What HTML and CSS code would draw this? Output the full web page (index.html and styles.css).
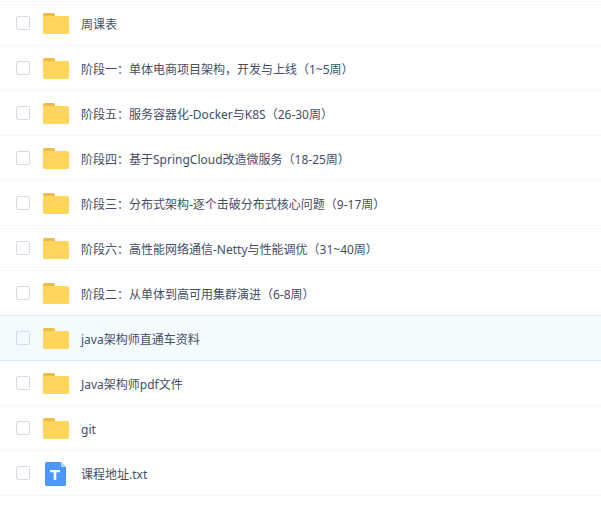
FILE: index.html
```html
<!DOCTYPE html>
<html lang="zh-CN">
  <head>
    <meta charset="UTF-8">
    <title>课程资料</title>
    <link rel="stylesheet" href="styles.css">
  </head>
  <body>
    <svg width="0" height="0" class="sprite" aria-hidden="true">
      <symbol id="folder" viewBox="0 0 26 26">
        <path d="M0 8V4.500Q0 3 1.500 3H10.500Q12 3 12 4.500V8Z" fill="#edbd4a"/>
        <path d="M0 6H24.500Q26 6 26 7.500V22.500Q26 24 24.500 24H1.500Q0 24 0 22.500Z" fill="#ffd55c"/>
      </symbol>
      <symbol id="text-file" viewBox="0 0 26 26">
        <path d="M3.500 2H18L23 7V24.500Q23 26 21.500 26H3.500Q2 26 2 24.500V3.500Q2 2 3.500 2Z" fill="#4d97ff"/>
        <path d="M18 2L23 7H19.500Q18 7 18 5.500Z" fill="#a9dcff"/>
        <path d="M7 10H17V12.200H13.300V20H10.700V12.200H7Z" fill="#fff"/>
      </symbol>
    </svg>

    <ul class="file-list">
      <li class="file">
        <input type="checkbox" id="f1" class="check">
        <svg class="icon"><use href="#folder"/></svg>
        <label for="f1" class="name">周课表</label>
      </li>
      <li class="file">
        <input type="checkbox" id="f2" class="check">
        <svg class="icon"><use href="#folder"/></svg>
        <label for="f2" class="name">阶段一：单体电商项目架构，开发与上线（1~5周）</label>
      </li>
      <li class="file">
        <input type="checkbox" id="f3" class="check">
        <svg class="icon"><use href="#folder"/></svg>
        <label for="f3" class="name">阶段五：服务容器化-Docker与K8S（26-30周）</label>
      </li>
      <li class="file">
        <input type="checkbox" id="f4" class="check">
        <svg class="icon"><use href="#folder"/></svg>
        <label for="f4" class="name">阶段四：基于SpringCloud改造微服务（18-25周）</label>
      </li>
      <li class="file">
        <input type="checkbox" id="f5" class="check">
        <svg class="icon"><use href="#folder"/></svg>
        <label for="f5" class="name">阶段三：分布式架构-逐个击破分布式核心问题（9-17周）</label>
      </li>
      <li class="file">
        <input type="checkbox" id="f6" class="check">
        <svg class="icon"><use href="#folder"/></svg>
        <label for="f6" class="name">阶段六：高性能网络通信-Netty与性能调优（31~40周）</label>
      </li>
      <li class="file before-active">
        <input type="checkbox" id="f7" class="check">
        <svg class="icon"><use href="#folder"/></svg>
        <label for="f7" class="name">阶段二：从单体到高可用集群演进（6-8周）</label>
      </li>
      <li class="file active">
        <input type="checkbox" id="f8" class="check">
        <svg class="icon"><use href="#folder"/></svg>
        <label for="f8" class="name">java架构师直通车资料</label>
      </li>
      <li class="file">
        <input type="checkbox" id="f9" class="check">
        <svg class="icon"><use href="#folder"/></svg>
        <label for="f9" class="name">Java架构师pdf文件</label>
      </li>
      <li class="file">
        <input type="checkbox" id="f10" class="check">
        <svg class="icon"><use href="#folder"/></svg>
        <label for="f10" class="name">git</label>
      </li>
      <li class="file">
        <input type="checkbox" id="f11" class="check">
        <svg class="icon"><use href="#text-file"/></svg>
        <label for="f11" class="name">课程地址.txt</label>
      </li>
    </ul>
  </body>
</html>
```
FILE: styles.css
```css
body {
    margin: 0;
    background: white;
    color: #424e67;
    font: 12px/18px "Noto Sans", "Noto Sans CJK SC", sans-serif;
}
.sprite {
    display: none;
}
.file-list {
    margin: 1px 0 0;
    padding: 0;
    list-style: none;
    box-shadow: inset 0 1px #f2f6fd;
}
.file {
    display: flex;
    align-items: center;
    box-sizing: border-box;
    min-height: 45px;
    padding: 0 16px;
    border-bottom: 1px solid #f2f6fd;
}
.before-active {
    border-color: #d9eafa;
}
.active {
    background: #f3fbff;
    border-color: #d9eafa;
}
.check {
    appearance: none;
    flex: none;
    box-sizing: border-box;
    width: 14px;
    height: 14px;
    margin: 0 13px 0 0;
    border: 1px solid #d5dbe6;
    border-radius: 2px;
}
.check:checked {
    background: #4d97ff;
    border-color: #4d97ff;
}
.icon {
    flex: none;
    width: 26px;
    height: 26px;
    margin-right: 12px;
}
.name {
    padding-top: 3px;
}
```
